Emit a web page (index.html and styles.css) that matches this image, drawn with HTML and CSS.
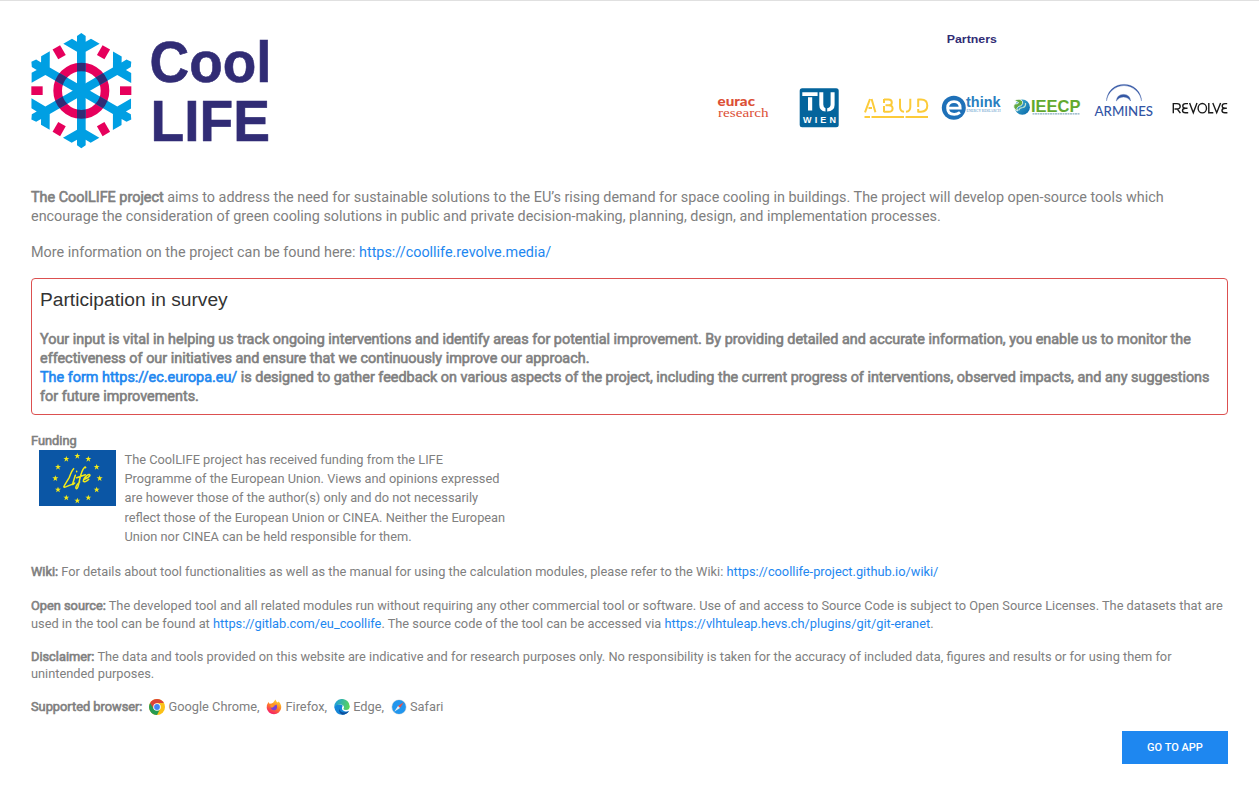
FILE: index.html
```html
<!DOCTYPE html>
<html lang="en">
<head>
<meta charset="utf-8">
<title>CoolLIFE</title>
<link rel="stylesheet" href="styles.css">
</head>
<body>
<main class="page">
  <header class="header">
    <svg class="logo" viewBox="31 30 250 120" role="img" aria-label="Cool LIFE">
      <defs>
        <path id="arm" d="M130 71 156 56 171 65V48L184 39 197 48V65L213 56 239 71 197 95V212H171V95Z"/>
        <clipPath id="spokes">
          <rect x="171" y="39" width="26" height="346"/>
          <rect x="171" y="39" width="26" height="346" transform="rotate(60 184 212)"/>
          <rect x="171" y="39" width="26" height="346" transform="rotate(120 184 212)"/>
        </clipPath>
      </defs>
      <g transform="translate(20 20) scale(.33333)">
        <circle class="ring" cx="184" cy="212" r="71"/>
        <g class="flake">
          <use href="#arm"/>
          <use href="#arm" transform="rotate(60 184 212)"/>
          <use href="#arm" transform="rotate(120 184 212)"/>
          <use href="#arm" transform="rotate(180 184 212)"/>
          <use href="#arm" transform="rotate(240 184 212)"/>
          <use href="#arm" transform="rotate(300 184 212)"/>
        </g>
        <circle class="ring ring-cross" cx="184" cy="212" r="71" clip-path="url(#spokes)"/>
        <g class="ticks">
          <rect x="300" y="199" width="34" height="26"/>
          <rect x="300" y="199" width="34" height="26" transform="rotate(60 184 212)"/>
          <rect x="300" y="199" width="34" height="26" transform="rotate(120 184 212)"/>
          <rect x="300" y="199" width="34" height="26" transform="rotate(180 184 212)"/>
          <rect x="300" y="199" width="34" height="26" transform="rotate(240 184 212)"/>
          <rect x="300" y="199" width="34" height="26" transform="rotate(300 184 212)"/>
        </g>
      </g>
      <g class="logo-text">
        <text x="149.5" y="82.300" textLength="122" lengthAdjust="spacingAndGlyphs">Cool</text>
        <text x="150.500" y="141" textLength="119.500" lengthAdjust="spacingAndGlyphs">LIFE</text>
      </g>
    </svg>

    <svg class="partners" viewBox="700 30 528 100" role="img" aria-label="Partners">
      <text class="p-title" x="946.8" y="43.3" textLength="50" lengthAdjust="spacingAndGlyphs">Partners</text>

      <g class="eurac">
        <text class="eurac-b" x="717.5" y="106" textLength="37.5" lengthAdjust="spacingAndGlyphs">eurac</text>
        <text class="eurac-r" x="718" y="117" textLength="50.5" lengthAdjust="spacingAndGlyphs">research</text>
      </g>

      <rect x="799.7" y="88.3" width="39" height="39" rx="2.5" fill="#04649c"/>
      <path d="M802.3 92.3H817.6V95.9H802.3ZM808 97.2H812.2V110.5H808Z" fill="#fff"/>
      <path d="M819.3 92.3H823.3V104.5Q823.3 107.5 825.5 108.2V111.6Q819.3 110.8 819.3 105ZM830.6 92.3H834.6V105Q834.6 110.8 827.2 111.6V108.2Q830.6 107.5 830.6 104.5Z" fill="#fff"/>
      <text class="wien" x="803" y="123" textLength="33" lengthAdjust="spacing">WIEN</text>

      <g class="abud">
        <path d="M865 112.3 870 99M871.6 99 875.4 112.3M868.5 108H872"/>
        <path d="M884 99.500H888.500Q891.800 99.500 891.800 102.400T888.500 105.300H885.500M888.500 105.300Q892.600 105.300 892.600 108.600T888.500 111.800H884M884 99V103M884 106V112.300"/>
        <path d="M900 98.800V107Q900 111.400 904 111.800M910.300 98.800V107Q910.300 111.400 906 111.800"/>
        <path d="M917.500 99.500H921Q927.300 99.500 927.300 105.600T921 111.800H917.500M918.200 99V107M918.200 109V112"/>
        <path d="M864.500 117H870M871.500 117H904M905.500 117H928"/>
      </g>

      <circle cx="953.800" cy="107.800" r="12" fill="#1e70b8"/>
      <path d="M947.600 108.200H960.200Q960.200 101.700 954 101.700T947.600 108Q947.600 114.300 954.200 114.300 957.500 114.300 960 112.300" fill="none" stroke="#fff" stroke-width="2.800"/>
      <text class="think" x="966" y="107" textLength="34.5" lengthAdjust="spacingAndGlyphs">think</text>
      <text class="think-sub" x="966.5" y="112" textLength="34" lengthAdjust="spacingAndGlyphs">ENERGY RESEARCH</text>

      <defs>
        <linearGradient id="globe" x1="0" y1="0" x2="1" y2="1">
          <stop offset="0" stop-color="#46b5d4"/><stop offset="1" stop-color="#0766a8"/>
        </linearGradient>
      </defs>
      <circle cx="1022.300" cy="107.200" r="7.600" fill="url(#globe)"/>
      <path d="M1014.500 100.500Q1020 97.500 1022.500 101.500 1023.500 105.500 1018.500 106.500 1016 108 1017.500 111 1012 108 1014.500 104Q1019 104 1018.500 102.500Z" fill="#62a944" stroke="#fff" stroke-width=".8"/>
      <path d="M1018.500 110.500Q1019.500 107.500 1023 107.500 1026 106.500 1025.500 103" fill="none" stroke="#bfe3d0" stroke-width="1.200"/>
      <text class="ieecp" x="1031" y="112" textLength="49.500" lengthAdjust="spacingAndGlyphs">IEECP</text>
      <path d="M1032.500 113.900H1080" stroke="#5b8da8" stroke-width=".9" stroke-dasharray="2 .5"/>

      <path d="M1106.500 101A17 17 0 0 1 1124 84.400 17 17 0 0 1 1141.500 101 18 18 0 0 0 1124 85.500 18 18 0 0 0 1106.500 101Z" fill="#3558a5" stroke="#3558a5" stroke-width=".3"/>
      <path d="M1116.300 101Q1117 94.400 1123.500 94.400T1130.600 101Q1128 96.900 1123.500 96.900T1116.300 101Z" fill="#3558a5" stroke="#3558a5" stroke-width=".4"/>
      <text class="armines" x="1094.500" y="115.600" textLength="58.500" lengthAdjust="spacingAndGlyphs">ARMINES</text>

      <g class="revolve" aria-label="REVOLVE">
        <path d="M1173.300 113.200V103.600H1177Q1180.200 103.600 1180.200 106.300T1177 109H1174.500M1177.300 109 1180.400 113.200"/>
        <path d="M1188 103.600H1185.500Q1182.800 103.600 1182.800 105.900T1185.500 108.200H1187.500M1185.500 108.200Q1182.500 108.200 1182.500 110.500T1185.500 112.800H1188.200"/>
        <path d="M1189.600 103 1193.300 112.700 1197 103"/>
        <ellipse cx="1202.300" cy="108.200" rx="4.200" ry="4.700"/>
        <path d="M1208.800 103V112.700H1213.300"/>
        <path d="M1212.800 103 1216.700 112.700 1220.600 103"/>
        <path d="M1227.200 103.600H1225Q1222.200 103.600 1222.200 105.900T1225 108.200H1226.800M1225 108.200Q1222 108.200 1222 110.500T1225 112.800H1227.400"/>
      </g>
    </svg>
  </header>

  <section class="intro">
    <p><b>The CoolLIFE project</b> aims to address the need for sustainable solutions to the EU’s rising demand for space cooling in buildings. The project will develop open-source tools which<br>encourage the consideration of green cooling solutions in public and private decision-making, planning, design, and implementation processes.</p>
    <p>More information on the project can be found here: <a href="#">https://coollife.revolve.media/</a></p>
  </section>

  <section class="survey">
    <h2>Participation in survey</h2>
    <p><b>Your input is vital in helping us track ongoing interventions and identify areas for potential improvement. By providing detailed and accurate information, you enable us to monitor the<br>effectiveness of our initiatives and ensure that we continuously improve our approach.<br><a href="#">The form https://ec.europa.eu/</a> is designed to gather feedback on various aspects of the project, including the current progress of interventions, observed impacts, and any suggestions<br>for future improvements.</b></p>
  </section>

  <section class="small">
    <div class="funding-title"><b>Funding</b></div>
    <div class="funding">
      <svg class="life" viewBox="0 0 231 168" role="img" aria-label="Life">
        <defs><path id="star" d="M0-9 2.300-3H9L3.500 1 5.600 8 0 4-5.600 8-3.500 1-9-3H-2.300Z"/></defs>
        <rect width="231" height="168" fill="#0b56a5"/>
        <g fill="#f4ea18">
          <use href="#star" x="115" y="18"/><use href="#star" x="148" y="27"/><use href="#star" x="173" y="51"/>
          <use href="#star" x="182" y="85"/><use href="#star" x="173" y="119"/><use href="#star" x="148" y="143"/>
          <use href="#star" x="115" y="152"/><use href="#star" x="82" y="143"/><use href="#star" x="57" y="119"/>
          <use href="#star" x="49" y="85"/><use href="#star" x="57" y="51"/><use href="#star" x="82" y="27"/>
        </g>
        <g class="script">
          <path d="M104 56Q98 62 91 82L76 107Q71 114 82 110L99 103"/>
          <path d="M109 76 101 101Q99 107 107 99M113 64V65"/>
          <path d="M140 53Q139 47 132 58 125 70 119 103 115 120 111 115 108 109 122 96M113 83 139 74"/>
          <path d="M136 88Q151 82 153 76 152 71 144 76 133 85 133 94 137 99 149 88"/>
        </g>
      </svg>
      <p>The CoolLIFE project has received funding from the LIFE<br>Programme of the European Union. Views and opinions expressed<br>are however those of the author(s) only and do not necessarily<br>reflect those of the European Union or CINEA. Neither the European<br>Union nor CINEA can be held responsible for them.</p>
    </div>
    <p class="note wiki"><b>Wiki:</b> For details about tool functionalities as well as the manual for using the calculation modules, please refer to the Wiki: <a href="#">https://coollife-project.github.io/wiki/</a></p>
    <p class="note open"><b>Open source:</b> The developed tool and all related modules run without requiring any other commercial tool or software. Use of and access to Source Code is subject to Open Source Licenses. The datasets that are<br>used in the tool can be found at <a href="#">https://gitlab.com/eu_coollife</a>. The source code of the tool can be accessed via <a href="#">https://vlhtuleap.hevs.ch/plugins/git/git-eranet</a>.</p>
    <p class="note disc"><b>Disclaimer:</b> The data and tools provided on this website are indicative and for research purposes only. No responsibility is taken for the accuracy of included data, figures and results or for using them for<br>unintended purposes.</p>
    <div class="browsers">
      <b>Supported browser:</b>
      <span class="browser"><svg viewBox="0 0 16 16"><circle cx="8" cy="8" r="8" fill="#fbc116"/><path d="M8 8 1.100 4A8 8 0 0 0 8 16L11.200 9.800 8 8 4.800 9.800Z" fill="#259b52"/><path d="M8 4H14.900A8 8 0 0 0 1.100 4L4.600 9.800Z" fill="#db4437"/><circle cx="8" cy="8" r="3.800" fill="#fff"/><circle cx="8" cy="8" r="2.900" fill="#4285f4"/></svg>Google Chrome,</span>
      <span class="browser"><svg viewBox="0 0 16 16"><defs><linearGradient id="fx" x1=".8" y1="0" x2=".3" y2="1"><stop offset="0" stop-color="#ffe03a"/><stop offset=".45" stop-color="#ff8a22"/><stop offset="1" stop-color="#f5156c"/></linearGradient></defs><path d="M2.500 3 3.500 4.700 5.500 4.500Q7.500 4 8 2.500L9.500.5Q10 2.500 11.500 3.500L12.500 2.500Q15.500 5 15.200 9A7.300 7 0 0 1 .7 9Q.5 5.500 2.500 3Z" fill="url(#fx)"/><path d="M5.500 6.500 8 7 10.500 5.500Q12 9 9.500 11 6 12 4.800 9Z" fill="#7542d7"/><path d="M4.500 5.500Q7 5 8.500 7L6.500 8.500Q5 9 4.500 7.500Z" fill="#ff9a25"/></svg>Firefox,</span>
      <span class="browser"><svg viewBox="0 0 16 16"><defs><linearGradient id="eg" x1="0" y1=".3" x2="1" y2=".5"><stop offset="0" stop-color="#1c9de0"/><stop offset="1" stop-color="#5bd657"/></linearGradient></defs><path d="M.2 8A7.800 7.800 0 0 1 15.800 7.500Q15.500 11 12 11 9 11 9.500 9.500 11 7 8 5.800 3.500 4.500.2 8Z" fill="url(#eg)"/><path d="M.2 8Q2.500 5 7 5.700 9.500 6.300 8.200 7.800 7.200 11 10 12 12.500 13 15 12 12.500 15.800 8 15.800 1.500 15.500.2 8Z" fill="#1486d8"/><path d="M5.200 9.500Q6 13.500 10.500 13.500 13 13.300 15 12 12.500 15.800 8.500 15.800 4.500 14 5.200 9.500Z" fill="#0c4f9c"/></svg>Edge,</span>
      <span class="browser"><svg viewBox="0 0 16 16"><circle cx="8" cy="8" r="7.600" fill="#d5dbe0"/><circle cx="8" cy="8" r="6.900" fill="#2196ee"/><path d="M12.800 3.200 7 7 9 9Z" fill="#f04d43"/><path d="M3.200 12.800 7 7 9 9Z" fill="#e8eef3"/></svg>Safari</span>
    </div>
  </section>

  <div class="actions"><button class="go">GO TO APP</button></div>
</main>
</body>
</html>
```
FILE: styles.css
```css
* { box-sizing: border-box; }
body {
  margin: 0;
  background: #fff;
  color: #808080;
  font-family: Roboto, "Liberation Sans", sans-serif;
}
p, h2 { margin: 0; white-space: nowrap; }
a { color: #1e87f0; text-decoration: none; }

/* The heavier weight keeps the regular letter widths */
b { font-weight: 400; -webkit-text-stroke: .6px currentColor; }

.page { height: 787px; border-top: 1px solid #e0e0e0; padding: 29px 31px 0; }
.header { display: flex; justify-content: space-between; height: 158px; }
.logo { width: 250px; height: 120px; }
.partners { width: 528px; height: 100px; }

.ring { fill: none; stroke: #e6005c; stroke-width: 26; }
.ring-cross { stroke: #312c75; }
.flake { fill: #009fe3; }
.ticks { fill: #e6005c; }
.logo-text {
  font: bold 58px "Liberation Sans", sans-serif;
  fill: #312c75;
  stroke: #312c75;
  stroke-width: .6;
}

.p-title { font: bold 11.5px "Liberation Sans", sans-serif; fill: #312c75; }
.eurac { fill: #dc5036; }
.eurac-b { font: 900 13px Lato, sans-serif; }
.eurac-r { font: 13px "Liberation Serif", serif; }
.wien { font: bold 9px "Liberation Sans", sans-serif; fill: #fff; }
.abud { fill: none; stroke: #fccb3a; stroke-width: 2; }
.think { font: bold 14px "Liberation Sans", sans-serif; fill: #2b7fc0; }
.think-sub { font: 4.5px "Liberation Serif", serif; fill: #4a90c8; }
.ieecp { font: bold 16.5px "Liberation Sans", sans-serif; fill: #62a92f; }
.armines { font: 500 13.5px Lato, sans-serif; fill: #3355a5; }
.revolve { fill: none; stroke: #1a1a1a; stroke-width: 1.4; }

.intro { font-size: 14.4px; line-height: 19px; }
.intro p + p { margin-top: 17px; }

.survey {
  height: 137px;
  margin-top: 16px;
  padding: 8px;
  border: 1px solid #dc5050;
  border-radius: 4px;
  font-size: 14.4px;
  line-height: 19px;
}
.survey h2 {
  margin-bottom: 17px;
  color: #333;
  font: 19.2px/26px "Liberation Sans", sans-serif;
}

.small { font-size: 12.8px; line-height: 19.2px; }
.funding-title { margin-top: 16px; height: 19px; }
.funding { display: flex; gap: 8.5px; padding-left: 8px; }
.life { width: 77px; height: 56px; }
.script { fill: none; stroke: #f4ea18; stroke-width: 4.5; stroke-linecap: round; stroke-linejoin: round; }
.note { line-height: 18px; }
.wiki { margin-top: 17px; }
.open { margin-top: 16px; }
.disc { margin-top: 15px; line-height: 17px; }
.browsers { display: flex; margin-top: 15px; line-height: 19px; }
.browser { display: flex; align-items: center; gap: 3px; margin-left: 7px; }
.browser svg { width: 16px; height: 16px; }

.actions { display: flex; justify-content: flex-end; margin-top: 15px; }
.go {
  width: 106px;
  height: 33px;
  padding: 0;
  border: 0;
  background: #1e87f0;
  color: #fff;
  font: 500 11px Roboto, sans-serif;
}
```
